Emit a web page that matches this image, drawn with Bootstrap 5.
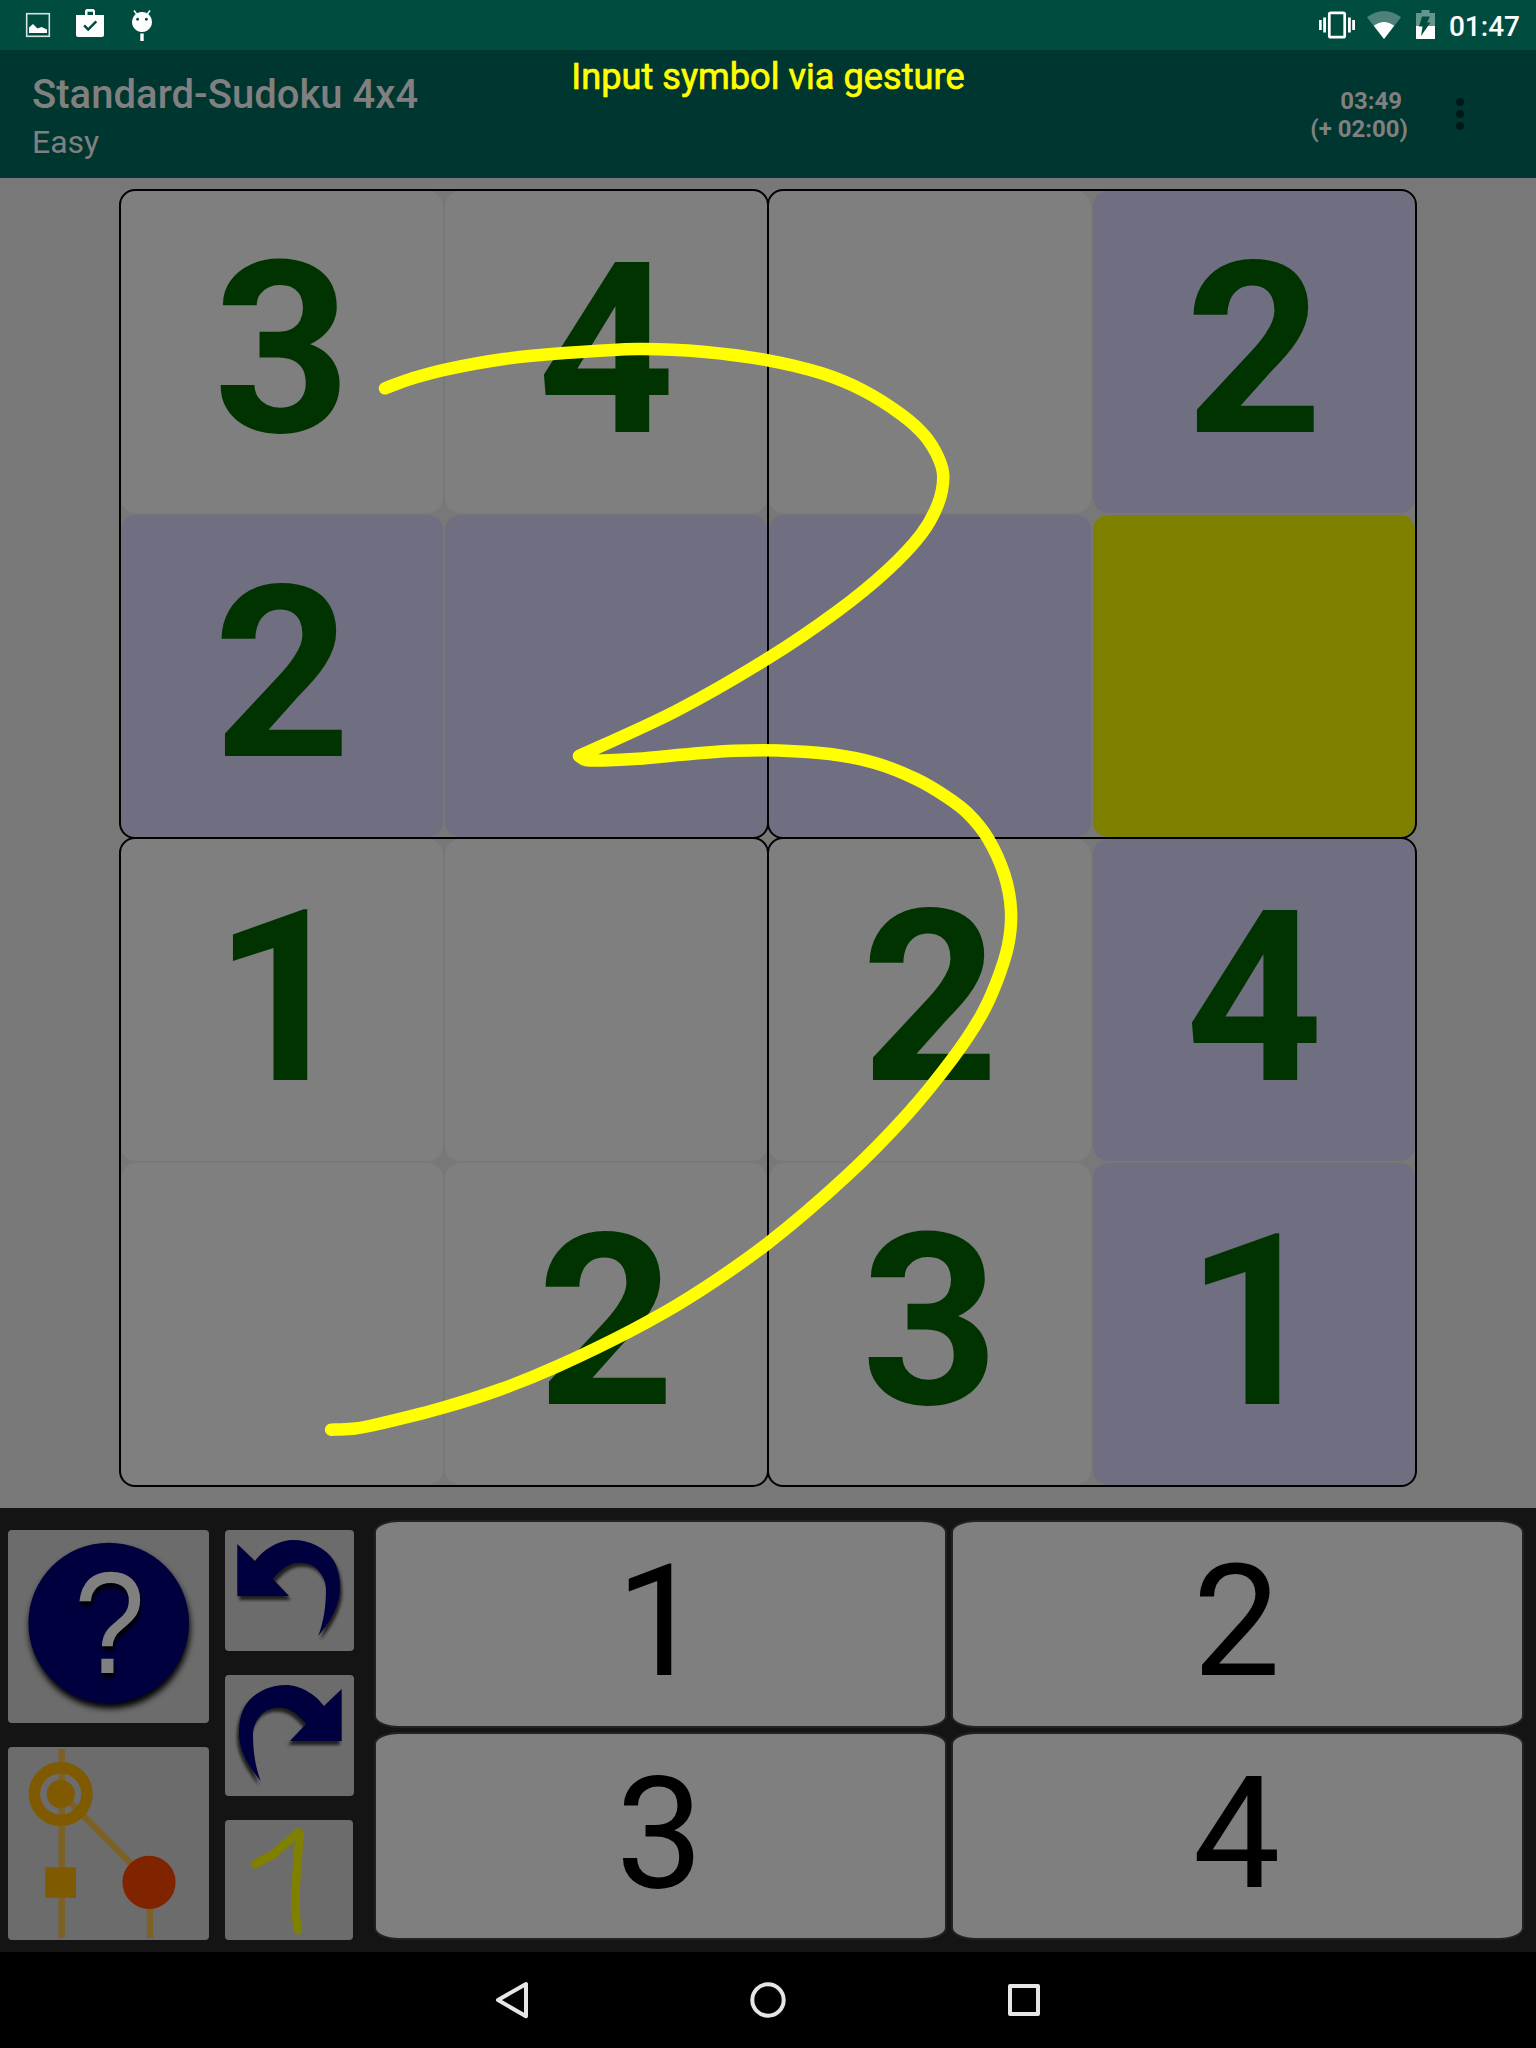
<!DOCTYPE html>
<html lang="en">
<head>
<meta charset="utf-8">
<title>Standard-Sudoku 4x4</title>
<meta name="viewport" content="width=device-width, initial-scale=1">
<link rel="stylesheet" href="https://cdn.jsdelivr.net/npm/bootstrap@5.3.0/dist/css/bootstrap.min.css">
<style>
  body { font-family: Roboto, "Liberation Sans", sans-serif; width: 1536px; height: 2048px; background: #000; overflow: hidden; }
  .statusbar { height: 50px; background: #004d40; color: #fff; padding-right: 16px; }
  .clock { width: 80px; font-size: 28px; font-weight: 500; line-height: 50px; padding-top: 2px; }
  .appbar { height: 128px; background: #003630; color: #808080; padding: 0 67px 0 32px; }
  .app-title { font-size: 40px; font-weight: 500; line-height: 48px; margin-top: 21px; letter-spacing: .03px; }
  .app-sub { font-size: 32px; line-height: 38px; margin-top: 4px; }
  .timer { font-size: 24px; font-weight: 700; line-height: 28px; margin: 2px 44px 0 0; white-space: pre; }
  .hint { color: #ff0; font-size: 36.2px; line-height: 42px; top: 6px; left: 0; width: 100%; -webkit-text-stroke: .7px #ff0; }
  .stage { height: 1330px; background: #787878; padding-top: 12px; }
  .board { width: 1296px; height: 1296px; display: grid; grid-template-columns: 648px 648px; }
  .block { height: 648px; display: grid; grid-template-columns: 324px 324px; grid-template-rows: 324px 324px; position: relative; }
  .block::after { content: ""; position: absolute; inset: -1px; border: 2px solid #000; border-radius: 16px; }
  .cell { margin: 1px; border-radius: 15px; background: #7f7f7f; color: #030; font-size: 240px; font-weight: 700; line-height: 318px; text-align: center; }
  .cell.lit { background: #706f81; }
  .cell.sel { background: #808000; }
  .keypad { height: 444px; background: #141414; padding: 12px 12px 12px 8px; }
  .tools { padding-top: 10px; }
  .tool { background: #6b6c6b; border-radius: 4px; overflow: hidden; display: block; padding: 0; border: 0; }
  .tool svg, .statusbar svg, .navkeys svg { display: block; }
  .keys { display: grid; grid-template-columns: 573px 573px; grid-template-rows: 208px 208px; gap: 4px; margin-left: 20px; }
  .key { background: #7f7f7f; border: 2px solid #222; border-radius: 25px / 12px; font-size: 156px; line-height: 198px; text-align: center; color: #000; padding: 0 2px 4px 0; }
  .navkeys { height: 96px; background: #000; }
  .trace { left: 0; top: 0; pointer-events: none; }
</style>
<script src="https://cdn.jsdelivr.net/npm/bootstrap@5.3.0/dist/js/bootstrap.bundle.min.js"></script>
</head>
<body class="position-relative m-0">

<header class="statusbar d-flex align-items-start">
  <svg width="160" height="50" viewBox="0 0 160 50" fill="#fff">
    <rect x="26.700" y="13.700" width="22.600" height="22.600" fill="none" stroke="#d5e3e0" stroke-width="1.600"/>
    <path d="M29 33v-5.500l4-3.500 4.500 4.500 4-1.500 5.500 2.500v3.500z"/>
    <path fill-rule="evenodd" d="M85 15v-4.500l1.500-1.500h7l1.500 1.500V15h9v20q0 2-2 2H78q-2 0-2-2V15zm2.500 0h5.500v-3.300h-5.500zM85 24.500l-1.800 1.800 5 5 9-9-1.800-1.800-7.200 7.300z"/>
    <path fill-rule="evenodd" d="M142 12a10 10 0 1 0 .01 0zM137.600 17.800a1.500 1.500 0 1 1-.01 0zM146.400 17.800a1.500 1.500 0 1 1-.01 0z"/>
    <path d="M137 14.500l-3-4M147 14.500l3-4" stroke="#fff" stroke-width="1.500"/>
    <rect x="140.300" y="33.500" width="3.400" height="7.500"/>
  </svg>
  <svg class="ms-auto" width="124" height="50" viewBox="1316 0 124 50" fill="#fff">
    <rect x="1329.300" y="12.800" width="15.400" height="24.400" rx="1.500" fill="none" stroke="#fff" stroke-width="2.700"/>
    <path d="M1319 20h2.700v10h-2.700zM1323.200 17.500h2.800v15h-2.800zM1348 17.500h2.800v15h-2.800zM1352.200 20h2.800v10h-2.800z"/>
    <path fill="#4d827a" d="M1367 17.300q17-12.600 34 0L1384 39z"/>
    <path d="M1373.800 25.800q10.200-7.600 20.400 0L1384 39z"/>
    <path fill="#66958d" d="M1421.500 10h8v3h5.500v13h-19V13h5.500z"/>
    <path d="M1416 26h19v13h-19z"/>
    <path fill="#004d40" d="M1422 16.500h8l-3 6h3.500L1421 36l1.500-9.500h-3.500z"/>
  </svg>
  <div class="clock text-end">01:47</div>
</header>

<nav class="appbar d-flex align-items-center position-relative">
  <div class="align-self-start">
    <div class="app-title">Standard-Sudoku 4x4</div>
    <div class="app-sub">Easy</div>
  </div>
  <div class="timer ms-auto text-end">03:49 
(+ 02:00)</div>
  <svg width="17" height="32" viewBox="0 0 17 32" fill="#001a17"><circle cx="8" cy="4" r="4"/><circle cx="8" cy="16" r="4"/><circle cx="8" cy="28" r="4"/></svg>
  <div class="hint position-absolute text-center">Input symbol via gesture</div>
</nav>

<main class="stage">
  <div class="board mx-auto">
    <div class="block">
      <div class="cell">3</div><div class="cell">4</div>
      <div class="cell lit">2</div><div class="cell lit"></div>
    </div>
    <div class="block">
      <div class="cell"></div><div class="cell lit">2</div>
      <div class="cell lit"></div><div class="cell sel"></div>
    </div>
    <div class="block">
      <div class="cell">1</div><div class="cell"></div>
      <div class="cell"></div><div class="cell">2</div>
    </div>
    <div class="block">
      <div class="cell">2</div><div class="cell lit">4</div>
      <div class="cell">3</div><div class="cell lit">1</div>
    </div>
  </div>
</main>

<section class="keypad d-flex">
  <div class="tools d-flex flex-column gap-4">
    <button class="tool" aria-label="Help">
      <svg width="201" height="193" viewBox="0 0 201 193">
        <circle cx="100.700" cy="93" r="80.300" fill="#00003f" style="filter:drop-shadow(1px 5px 3px #000)"/>
        <g transform="translate(101.500 143) scale(.92 1.050)"><text font-family="Liberation Sans, sans-serif" font-size="138" text-anchor="middle" fill="#808080" style="filter:drop-shadow(1px 4px 2px #000)">?</text></g>
      </svg>
    </button>
    <button class="tool" aria-label="Assistance tree">
      <svg width="201" height="193" viewBox="0 0 201 193">
        <path d="M53.700 2v189M142 135v56M54 47l87 88" stroke="#7c6123" stroke-width="6.300" fill="none"/>
        <circle cx="52.700" cy="47" r="26.300" fill="none" stroke="#805a00" stroke-width="11.400"/>
        <circle cx="52.700" cy="47" r="14" fill="#805a00"/>
        <rect x="37.300" y="120.300" width="30.700" height="30.500" fill="#805a00"/>
        <circle cx="141" cy="135.300" r="26.600" fill="#802400"/>
      </svg>
    </button>
  </div>
  <div class="tools d-flex flex-column gap-4 ms-3">
    <button class="tool" aria-label="Undo">
      <svg width="129" height="121" viewBox="0 0 129 121">
        <g style="filter:drop-shadow(2px 4px 1.500px rgba(0,0,0,.7))"><path id="arrow" fill="#00003f" d="M12.300 14 30 31C38 20 53 10 68.300 10 85 10 101 18 109 31 114 40 115 50 115 59 115 75 105 92 93.300 106 99 91 101 75 101 60 101 52 98 46 93 40 88 34 81 32.700 74.300 32.700 64 32.700 55 40 48 49L64 66H12.300z"/></g>
      </svg>
    </button>
    <button class="tool" aria-label="Redo">
      <svg width="129" height="121" viewBox="0 0 129 121">
        <g style="filter:drop-shadow(-2px 4px 1.500px rgba(0,0,0,.7))"><use href="#arrow" transform="translate(129 0) scale(-1 1)"/></g>
      </svg>
    </button>
    <button class="tool" aria-label="Gesture input" style="width:128px">
      <svg width="128" height="120" viewBox="0 0 128 120">
        <path d="M30 44.300Q35 41 46.700 35.500C54 30 64 20 72.700 12.700Q75 12 74.500 16C73 36 70 60 70.500 88Q71 100 72.700 110" fill="none" stroke="#808000" stroke-width="8.600" stroke-linecap="round" stroke-linejoin="round"/>
      </svg>
    </button>
  </div>
  <div class="keys">
    <button class="key">1</button><button class="key">2</button>
    <button class="key">3</button><button class="key">4</button>
  </div>
</section>

<footer class="navkeys">
  <svg class="mx-auto" width="560" height="96" viewBox="488 1952 560 96" fill="none" stroke="#e6e6e6" stroke-width="4" stroke-linejoin="round">
    <path d="M526 1984v32.300L498 2000z"/>
    <circle cx="768" cy="2000" r="15.700"/>
    <rect x="1010" y="1986" width="28" height="28"/>
  </svg>
</footer>

<svg class="trace position-absolute" width="1536" height="2048" fill="none" stroke="#ff0" stroke-width="12.500" stroke-linecap="round" stroke-linejoin="round"><path id="trace"/></svg>

<script>
  // Sampled touch points of the drawn gesture, joined by a Catmull-Rom spline.
  const strokes = [
    [[385,388.3],[412,378.5],[446.5,369.3],[504,359],[561.3,353.3],[638,349],[703,351.7],[768,360.3],[821.6,373.3],[863.7,390.7],[902,415],[925,436],[938.5,458],[943.3,477],[938,504],[921,534.5],[886.6,571],[837,611.5],[768,658.3],[676,711],[579,756]],
    [[579,756],[586,760],[603,760.5],[638,758.8],[695,753.5],[735,750.7],[779,750.4],[830,754],[876,763.2],[916,779],[946,796.5],[968,813.5],[988,838.5],[1004.5,875],[1011,911],[1008,945.8],[996.4,982.5],[980.3,1017],[952.8,1058.3],[906.9,1114.8],[847.2,1175.4],[768.2,1243],[691,1296.6],[631.4,1330.5],[558,1366],[500,1389.5],[440,1408.5],[374,1425],[352,1428.8],[331.1,1429.7]]
  ];
  let d = "";
  strokes.forEach((p, s) => {
    d += s ? "" : "M" + p[0];
    for (let i = 0; i < p.length - 1; i++) {
      const a = p[i - 1] || p[i], b = p[i], c = p[i + 1], e = p[i + 2] || c;
      d += "C" + [b[0] + (c[0] - a[0]) / 6, b[1] + (c[1] - a[1]) / 6, c[0] - (e[0] - b[0]) / 6, c[1] - (e[1] - b[1]) / 6, c[0], c[1]];
    }
  });
  document.getElementById("trace").setAttribute("d", d);
</script>
</body>
</html>
